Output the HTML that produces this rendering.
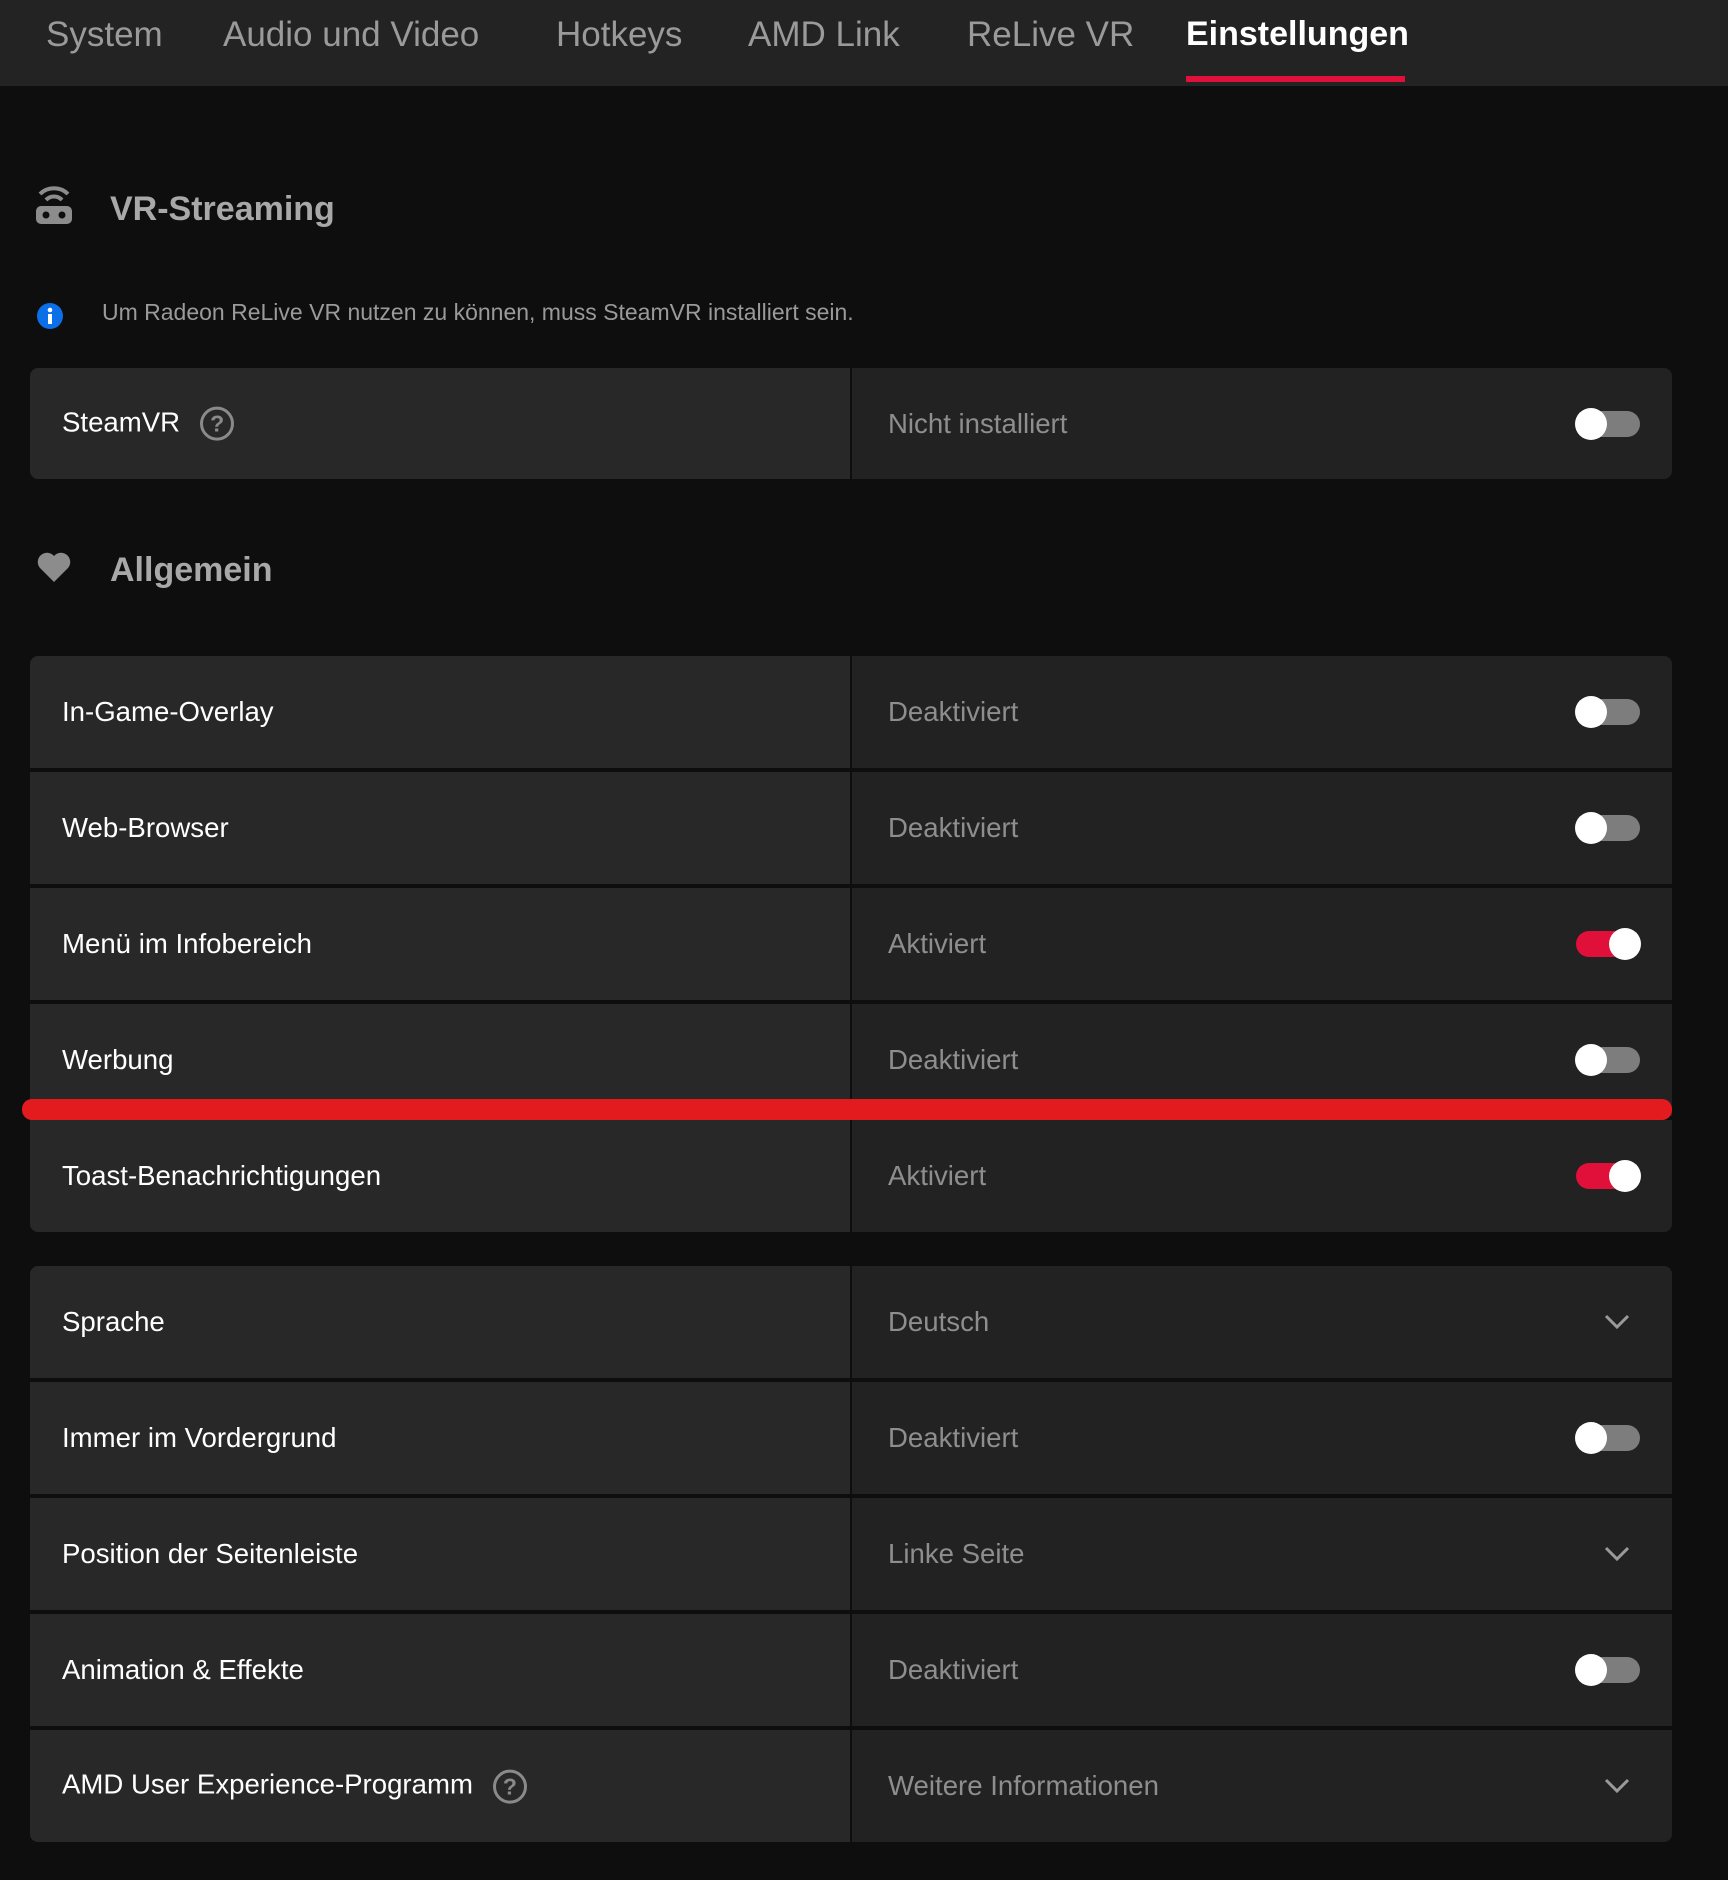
<!DOCTYPE html>
<html><head><meta charset="utf-8"><style>
*{margin:0;padding:0;box-sizing:border-box}
body{width:1728px;height:1880px;background:#0e0e0e;font-family:"Liberation Sans",sans-serif;position:relative;overflow:hidden}
.hdr{position:absolute;left:0;top:0;width:1728px;height:86px;background:#232323}
.tab{position:absolute;top:15px;font-size:35px;color:#9a9a9a;white-space:nowrap}
.tab.on{color:#fff;font-weight:bold;font-size:34px}
.ul{position:absolute;left:1186px;top:76px;width:219px;height:6px;background:#e0103a}
.h2{position:absolute;left:110px;font-size:34px;color:#a8a8a8;font-weight:bold}
.info{position:absolute;left:102px;top:299px;font-size:23px;color:#9a9a9a}
.row{position:absolute;left:30px;width:1642px;height:112px}
.row .l{position:absolute;left:0;top:0;width:820px;height:100%;background:#282828}
.row .r{position:absolute;left:822px;top:0;right:0;height:100%;background:#222}
.row .lt{position:absolute;left:32px;top:50%;transform:translateY(-50%);font-size:27.6px;color:#fff;white-space:nowrap}
.row .rt{position:absolute;left:36px;top:50%;transform:translateY(-50%);font-size:27.6px;color:#8e8e8e;white-space:nowrap}
.tg{position:absolute;right:32px;top:50%;margin-top:-13px;width:64px;height:26px;border-radius:13px;background:#7d7d7d}
.tg.on{background:#e0103a}
.tg::after{content:"";position:absolute;top:-3px;left:-1px;width:32px;height:32px;border-radius:50%;background:#fff}
.tg.on::after{left:33px}
.chev{position:absolute;right:42px;top:50%;margin-top:-8px}
.q{display:inline-block;width:34px;height:34px;border:3px solid #8a8a8a;border-radius:50%;color:#8a8a8a;font-size:23px;font-weight:bold;text-align:center;line-height:28px;vertical-align:middle;margin-left:20px}
.tl{border-top-left-radius:8px}.tr{border-top-right-radius:8px}.bl{border-bottom-left-radius:8px}.br{border-bottom-right-radius:8px}
</style></head><body>
<div class="hdr">
<div class="tab" style="left:46px">System</div>
<div class="tab" style="left:223px">Audio und Video</div>
<div class="tab" style="left:556px">Hotkeys</div>
<div class="tab" style="left:748px">AMD Link</div>
<div class="tab" style="left:967px">ReLive VR</div>
<div class="tab on" style="left:1186px">Einstellungen</div>
<div class="ul"></div>
</div>

<svg style="position:absolute;left:34px;top:180px" width="40" height="46" viewBox="0 0 40 46">
<path d="M6 14 A20 20 0 0 1 34 14" stroke="#8c8c8c" stroke-width="4" fill="none"/>
<path d="M12 20 A11 11 0 0 1 28 20" stroke="#8c8c8c" stroke-width="4" fill="none"/>
<rect x="2" y="26" width="36" height="18" rx="5" fill="#8c8c8c"/>
<circle cx="12" cy="35" r="3.5" fill="#0e0e0e"/><circle cx="28" cy="35" r="3.5" fill="#0e0e0e"/>
</svg>
<div class="h2" style="top:190px">VR-Streaming</div>

<svg style="position:absolute;left:36px;top:302px" width="28" height="28"><circle cx="14" cy="14" r="13" fill="#0b6fe8"/><rect x="12" y="12" width="4" height="10" fill="#fff"/><circle cx="14" cy="8" r="2.3" fill="#fff"/></svg>
<div class="info">Um Radeon ReLive VR nutzen zu können, muss SteamVR installiert sein.</div>

<div class="row" style="top:368px;height:111px"><div class="l tl bl"><div class="lt">SteamVR<span class="q">?</span></div></div><div class="r tr br"><div class="rt">Nicht installiert</div><div class="tg"></div></div></div>

<svg style="position:absolute;left:37px;top:551px" width="34" height="32" viewBox="0 0 34 32"><path d="M17 31 L3 17 A8.5 8.5 0 0 1 17 5 A8.5 8.5 0 0 1 31 17 Z" fill="#8c8c8c"/></svg>
<div class="h2" style="top:551px">Allgemein</div>

<div class="row" style="top:656px"><div class="l tl"><div class="lt">In-Game-Overlay</div></div><div class="r tr"><div class="rt">Deaktiviert</div><div class="tg"></div></div></div>
<div class="row" style="top:772px"><div class="l"><div class="lt">Web-Browser</div></div><div class="r"><div class="rt">Deaktiviert</div><div class="tg"></div></div></div>
<div class="row" style="top:888px"><div class="l"><div class="lt">Menü im Infobereich</div></div><div class="r"><div class="rt">Aktiviert</div><div class="tg on"></div></div></div>
<div class="row" style="top:1004px"><div class="l"><div class="lt">Werbung</div></div><div class="r"><div class="rt">Deaktiviert</div><div class="tg"></div></div></div>
<div class="row" style="top:1120px"><div class="l bl"><div class="lt">Toast-Benachrichtigungen</div></div><div class="r br"><div class="rt">Aktiviert</div><div class="tg on"></div></div></div>
<div style="position:absolute;left:22px;top:1099px;width:1650px;height:21px;background:#e41b1e;border-radius:10px"></div>

<div class="row" style="top:1266px"><div class="l tl"><div class="lt">Sprache</div></div><div class="r tr"><div class="rt">Deutsch</div><svg class="chev" width="26" height="16"><path d="M2 2 L13 13 L24 2" stroke="#9a9a9a" stroke-width="3" fill="none"/></svg></div></div>
<div class="row" style="top:1382px"><div class="l"><div class="lt">Immer im Vordergrund</div></div><div class="r"><div class="rt">Deaktiviert</div><div class="tg"></div></div></div>
<div class="row" style="top:1498px"><div class="l"><div class="lt">Position der Seitenleiste</div></div><div class="r"><div class="rt">Linke Seite</div><svg class="chev" width="26" height="16"><path d="M2 2 L13 13 L24 2" stroke="#9a9a9a" stroke-width="3" fill="none"/></svg></div></div>
<div class="row" style="top:1614px"><div class="l"><div class="lt">Animation &amp; Effekte</div></div><div class="r"><div class="rt">Deaktiviert</div><div class="tg"></div></div></div>
<div class="row" style="top:1730px"><div class="l bl"><div class="lt">AMD User Experience-Programm<span class="q">?</span></div></div><div class="r br"><div class="rt">Weitere Informationen</div><svg class="chev" width="26" height="16"><path d="M2 2 L13 13 L24 2" stroke="#9a9a9a" stroke-width="3" fill="none"/></svg></div></div>
</body></html>
